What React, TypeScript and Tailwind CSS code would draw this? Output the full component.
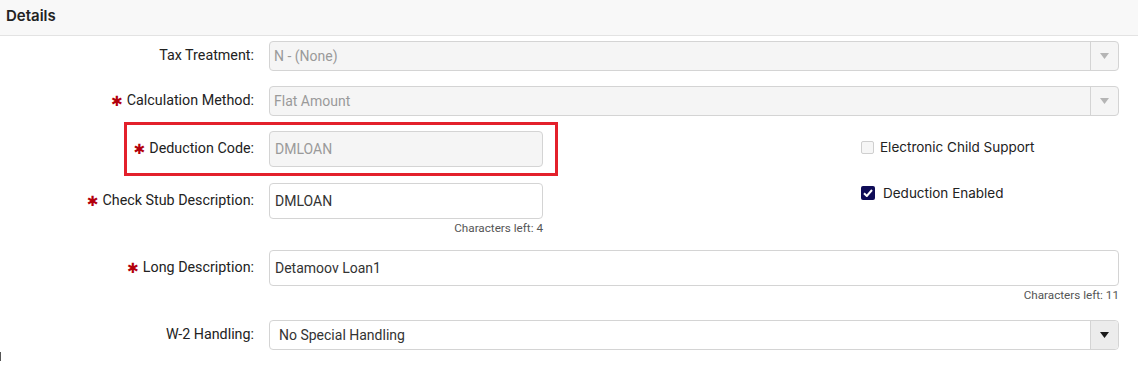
import React from "react";

const Star = () => (
  <span className="mr-[4px] text-[14px] leading-none text-[#b3000c] font-['DejaVu_Sans',sans-serif]">
    ✱
  </span>
);

function Label({ text, required }: { text: string; required?: boolean }) {
  return (
    <div className="w-[254px] shrink-0 flex items-center justify-end text-[14.3px] text-[#222]">
      {required && <Star />}
      <span>{text}:</span>
    </div>
  );
}

function Select({ value, disabled }: { value: string; disabled?: boolean }) {
  return (
    <div
      className={`flex h-[30px] flex-1 items-stretch rounded-[4px] border border-[#d4d4d4] ${
        disabled ? "bg-[#f5f5f5] text-[#9a9a9a]" : "bg-white text-[#333]"
      }`}
    >
      <div
        className={`flex flex-1 items-center text-[14px] ${
          disabled ? "pl-[4px]" : "pl-[9px]"
        }`}
      >
        {value}
      </div>
      <div
        className={`flex w-[28px] items-center justify-center border-l border-[#d4d4d4] ${
          disabled ? "" : "bg-[#ececec] rounded-r-[4px]"
        }`}
      >
        <svg width="9" height="6" viewBox="0 0 9 6">
          <path d="M0 0 L9 0 L4.5 6 Z" fill={disabled ? "#b5b5b5" : "#1a1a1a"} />
        </svg>
      </div>
    </div>
  );
}

function TextBox({
  value,
  disabled,
  className,
}: {
  value: string;
  disabled?: boolean;
  className?: string;
}) {
  return (
    <div
      className={`flex h-[36px] items-center rounded-[4px] border border-[#d4d4d4] pl-[5px] text-[14px] ${
        disabled ? "bg-[#f5f5f5] text-[#9a9a9a]" : "bg-white text-[#333]"
      } ${className ?? ""}`}
    >
      {value}
    </div>
  );
}

function CharsLeft({ n }: { n: number }) {
  return (
    <div className="mt-[3px] text-right text-[11.7px] leading-[13px] text-[#555]">
      Characters left: {n}
    </div>
  );
}

function Check({ label, checked }: { label: string; checked?: boolean }) {
  return (
    <div className="flex items-center font-['Inter',sans-serif] text-[13.5px] text-[#222]">
      {checked ? (
        <div className="mr-[8px] flex h-[14px] w-[14px] items-center justify-center rounded-[2px] bg-[#0f0c57]">
          <svg width="10" height="8" viewBox="0 0 10 8">
            <path d="M1 4.2 L3.8 7 L9 1" stroke="white" strokeWidth="2" fill="none" />
          </svg>
        </div>
      ) : (
        <div className="mr-[6px] h-[13px] w-[13px] rounded-[2px] border border-[#cfcfcf] bg-[#f6f6f6]" />
      )}
      <span>{label}</span>
    </div>
  );
}

export default function App() {
  return (
    <div className="relative h-[365px] w-[1138px] overflow-hidden bg-white font-['Roboto',sans-serif]">
      <div className="flex h-[36px] items-center border-b border-[#e3e3e3] bg-[#f8f8f8] pb-[3px] pl-[6px] font-['Inter',sans-serif] text-[15px] font-semibold text-[#222]">
        Details
      </div>

      <div className="flex flex-col pt-[5px] pr-[19px]">
        <div className="flex items-center gap-[15px]">
          <Label text="Tax Treatment" />
          <Select value="N - (None)" disabled />
        </div>

        <div className="mt-[15px] flex items-center gap-[15px]">
          <Label text="Calculation Method" required />
          <Select value="Flat Amount" disabled />
        </div>

        <div className="mt-[15px] flex">
          <div className="flex flex-col">
            <div className="flex items-center gap-[15px]">
              <Label text="Deduction Code" required />
              <TextBox value="DMLOAN" disabled className="w-[274px]" />
            </div>
            <div className="mt-[16px] flex gap-[15px]">
              <div className="flex h-[36px] items-center">
                <Label text="Check Stub Description" required />
              </div>
              <div className="w-[274px]">
                <TextBox value="DMLOAN" />
                <CharsLeft n={4} />
              </div>
            </div>
          </div>
          <div className="ml-[318px] flex flex-col gap-[26px] pt-[6px]">
            <Check label="Electronic Child Support" />
            <Check label="Deduction Enabled" checked />
          </div>
        </div>

        <div className="mt-[15px] flex gap-[15px]">
          <div className="flex h-[36px] items-center">
            <Label text="Long Description" required />
          </div>
          <div className="flex-1">
            <TextBox value="Detamoov Loan1" />
            <CharsLeft n={11} />
          </div>
        </div>

        <div className="mt-[18px] flex items-center gap-[15px]">
          <Label text="W-2 Handling" />
          <Select value="No Special Handling" />
        </div>
      </div>

      <div className="absolute left-[124px] top-[122px] h-[54px] w-[434px] border-[3px] border-[#e3202b]" />
      <div className="absolute left-0 top-[352px] h-[9px] w-[1px] bg-[#555]" />
    </div>
  );
}
